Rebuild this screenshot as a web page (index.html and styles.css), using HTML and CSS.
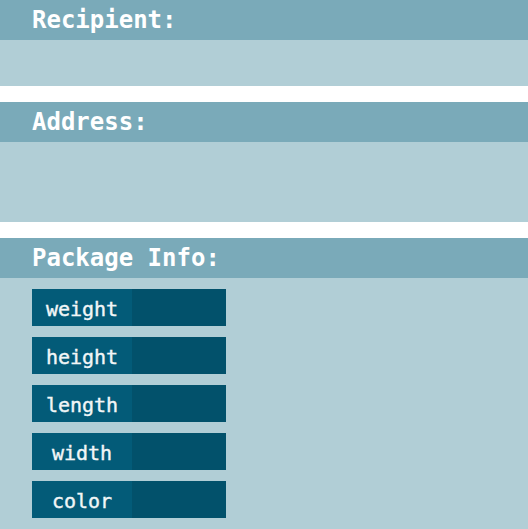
FILE: index.html
```html
<!DOCTYPE html>
<html>
<head>
<meta charset="utf-8">
<link rel="stylesheet" href="styles.css">
</head>
<body>
<section class="section">
  <h2 class="section-title">Recipient:</h2>
  <div class="section-body body-recipient"></div>
</section>
<section class="section">
  <h2 class="section-title">Address:</h2>
  <div class="section-body body-address"></div>
</section>
<section class="section section-last">
  <h2 class="section-title">Package Info:</h2>
  <div class="section-body body-package">
    <div class="field"><span class="field-label">weight</span><span class="field-input"></span></div>
    <div class="field"><span class="field-label">height</span><span class="field-input"></span></div>
    <div class="field"><span class="field-label">length</span><span class="field-input"></span></div>
    <div class="field"><span class="field-label">width</span><span class="field-input"></span></div>
    <div class="field"><span class="field-label">color</span><span class="field-input"></span></div>
  </div>
</section>
</body>
</html>
```
FILE: styles.css
```css
html, body {
  margin: 0;
  padding: 0;
  background: #ffffff;
}
body {
  font-family: "DejaVu Sans Mono", "Liberation Mono", monospace;
  height: 529px;
  overflow: hidden;
}
.section {
  margin-bottom: 16px;
}
.section-last {
  margin-bottom: 0;
}
.section-title {
  margin: 0;
  height: 40px;
  line-height: 40px;
  padding-left: 32px;
  background: #7aaab9;
  color: #ffffff;
  font-size: 24px;
  font-weight: bold;
}
.section-body {
  background: #b1ced6;
}
.body-recipient {
  height: 46px;
}
.body-address {
  height: 80px;
}
.body-package {
  padding: 11px 32px 11px;
  display: flex;
  flex-direction: column;
  gap: 11px;
}
.field {
  display: flex;
  width: 194px;
  height: 37px;
}
.field-label {
  width: 100px;
  background: #035b78;
  color: #f2f6f7;
  font-size: 20px;
  font-weight: normal;
  -webkit-text-stroke: 0.4px #f2f6f7;
  text-align: center;
  line-height: 40px;
}
.field-input {
  flex: 1;
  background: #02516b;
}
```
